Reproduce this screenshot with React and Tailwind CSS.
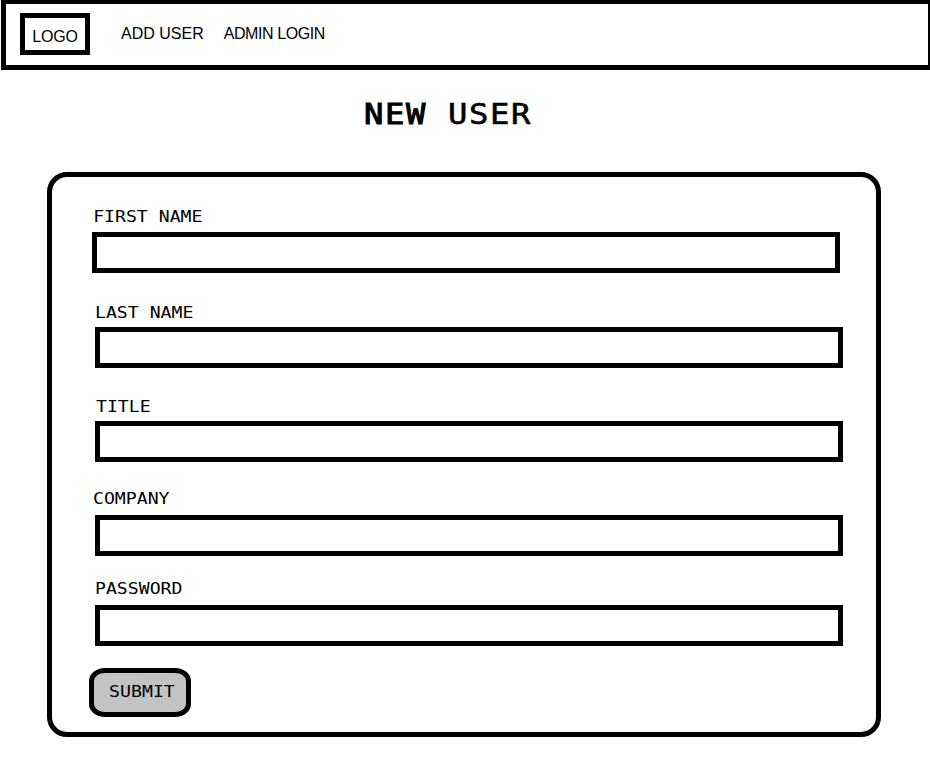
const fields = [
  { label: "FIRST NAME", id: "first", cls: "ml-[40px]", text: "pl-[1px] pt-px", h: "h-[24px]", gap: "mb-[31px]" },
  { label: "LAST NAME", id: "last", cls: "ml-[43px]", text: "ml-0 pt-px", h: "h-[23px]", gap: "mb-[31px]" },
  { label: "TITLE", id: "title", cls: "ml-[43px]", text: "ml-px", h: "h-[22px]", gap: "mb-[28px]" },
  { label: "COMPANY", id: "company", cls: "ml-[43px]", text: "-ml-[2px] pt-px", h: "h-[25px]", gap: "mb-[25px]" },
  { label: "PASSWORD", id: "password", cls: "ml-[43px]", text: "ml-0", h: "h-[24px]", gap: "mb-[22px]" },
];

function Field({ label, id, cls, text, h, gap }) {
  return (
    <div className={`w-[748px] ${cls} ${gap}`}>
      <label
        htmlFor={id}
        className={`block origin-left scale-x-[1.135] whitespace-nowrap text-[16px] leading-[16px] font-['DejaVu_Sans_Mono',monospace] ${text} ${h}`}
      >
        {label}
      </label>
      <input
        id={id}
        type={id === "password" ? "password" : "text"}
        className="block h-[41px] w-full border-[5px] border-black bg-white px-2 outline-none"
      />
    </div>
  );
}

export default function App() {
  return (
    <div className="h-[773px] w-[930px] overflow-hidden bg-white text-black">
      <header className="ml-px flex h-[70px] w-[929px] border-t-4 border-r-2 border-b-[5px] border-l-[5px] border-black font-['Liberation_Sans',Arial,sans-serif] text-[16px] leading-[18px]">
        <div className="mt-[9px] ml-[14px] flex h-[42px] w-[70px] justify-center border-[5px] border-black pt-[10px] tracking-[-0.2px]">
          LOGO
        </div>
        <nav className="mt-[21px] ml-[31px] flex gap-[20px] whitespace-nowrap">
          <a>ADD USER</a>
          <a className="tracking-[-0.42px]">ADMIN LOGIN</a>
        </nav>
      </header>
      <h1 className="mt-[28px] ml-[364px] h-[32px] w-[160px] origin-left scale-x-[1.13] font-['DejaVu_Sans_Mono',monospace] text-[28.5px] leading-[33px] font-normal tracking-[1.43px] whitespace-nowrap">
        <span className="[-webkit-text-stroke:1px_black]">NEW</span>
        <span className="[-webkit-text-stroke:0.6px_black]"> USER</span>
      </h1>
      <main className="mt-[42px] ml-[47px] h-[565px] w-[834px] rounded-[20px] border-[5px] border-black pt-[31px]">
        <form>
          {fields.map((f) => (
            <Field key={f.id} {...f} />
          ))}
          <button
            type="button"
            className="ml-[37px] flex h-[49px] w-[102px] items-center justify-center rounded-[16px/13px] border-[5px] border-black bg-[#c3c3c3] pb-[2px] pl-[4px] font-['DejaVu_Sans_Mono',monospace] text-[16px] leading-[16px]"
          >
            <span className="scale-x-[1.14]">SUBMIT</span>
          </button>
        </form>
      </main>
    </div>
  );
}
